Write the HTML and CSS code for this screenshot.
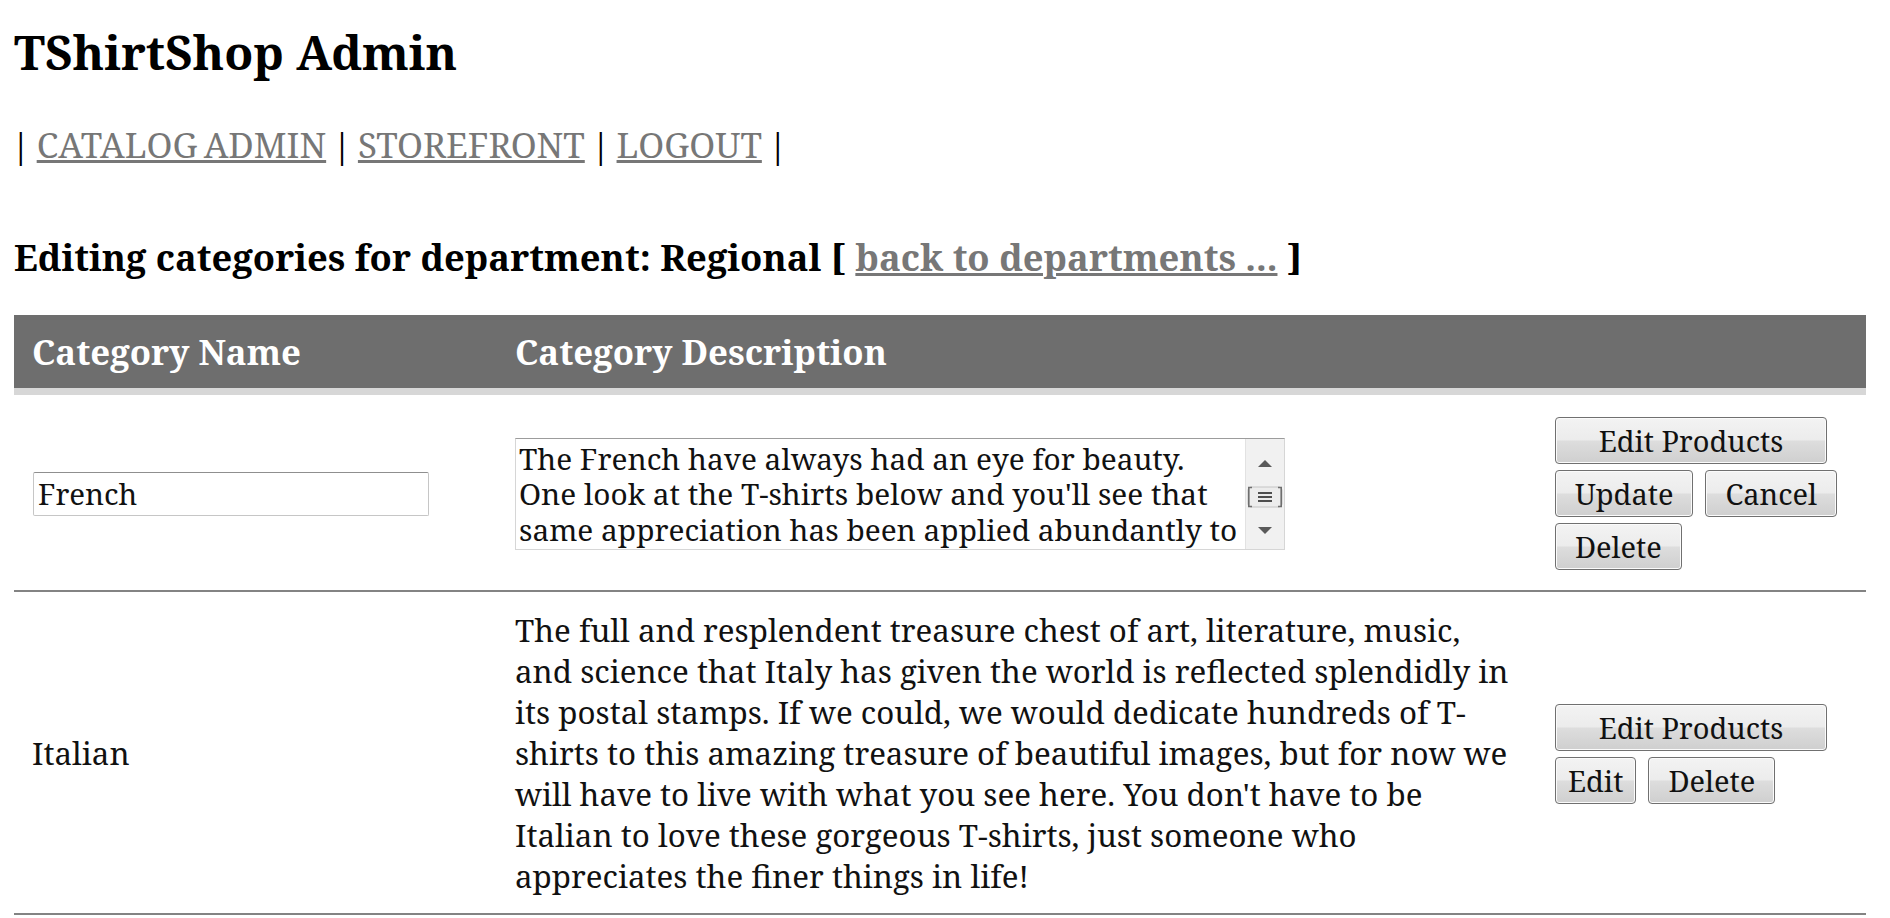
FILE: index.html
```html
<!DOCTYPE html>
<html lang="en">
<head>
<meta charset="utf-8">
<title>TShirtShop Admin</title>
<link rel="stylesheet" href="styles.css">
</head>
<body>
<h1 class="title">TShirtShop Admin</h1>
<nav class="menu">| <a href="#">CATALOG ADMIN</a> | <a href="#">STOREFRONT</a> | <a href="#">LOGOUT</a> |</nav>
<h2 class="section-title">Editing categories for department: Regional [ <a href="#">back to departments ...</a> ]</h2>
<table class="grid">
  <colgroup>
    <col class="c-name">
    <col class="c-desc">
    <col class="c-act">
  </colgroup>
  <thead>
    <tr>
      <th>Category Name</th>
      <th>Category Description</th>
      <th></th>
    </tr>
  </thead>
  <tbody>
    <tr>
      <td><input class="name-input" type="text" value="French"></td>
      <td>
        <div class="desc-box">
          <textarea class="desc-input">The French have always had an eye for beauty. One look at the T-shirts below and you'll see that same appreciation has been applied abundantly to everything from painting to sculpture to architecture. Enjoy!</textarea>
          <div class="vscroll">
            <svg class="arrow" width="14" height="7" viewBox="0 0 14 7"><path d="M7 0 L14 7 H0 Z" fill="#5a5a5a"/></svg>
            <svg class="thumb" width="36" height="22" viewBox="0 0 36 22">
              <rect x="1" y="1" width="34" height="20" rx="3" fill="#ececec" stroke="#c4c4c4"/>
              <path d="M5 1.5 H1.8 V20.5 H5 M31 1.5 H34.2 V20.5 H31" fill="none" stroke="#6e6e6e" stroke-width="1.6"/>
              <path d="M11 7 H25 M11 11 H25 M11 15 H25" stroke="#4e4e4e" stroke-width="2"/>
            </svg>
            <svg class="arrow" width="14" height="7" viewBox="0 0 14 7"><path d="M0 0 H14 L7 7 Z" fill="#5a5a5a"/></svg>
          </div>
        </div>
      </td>
      <td>
        <div class="actions">
          <button class="btn btn-wide" type="button">Edit Products</button>
          <button class="btn" type="button">Update</button>
          <button class="btn" type="button">Cancel</button>
          <button class="btn" type="button">Delete</button>
        </div>
      </td>
    </tr>
    <tr>
      <td>Italian</td>
      <td>The full and resplendent treasure chest of art, literature, music, and science that Italy has given the world is reflected splendidly in its postal stamps. If we could, we would dedicate hundreds of T-shirts to this amazing treasure of beautiful images, but for now we will have to live with what you see here. You don't have to be Italian to love these gorgeous T-shirts, just someone who appreciates the finer things in life!</td>
      <td>
        <div class="actions">
          <button class="btn btn-wide" type="button">Edit Products</button>
          <button class="btn btn-narrow" type="button">Edit</button>
          <button class="btn" type="button">Delete</button>
        </div>
      </td>
    </tr>
  </tbody>
</table>
</body>
</html>
```
FILE: styles.css
```css
html, body {
  background: #ffffff;
}

body {
  margin: 0;
  padding: 0 14px;
  font-family: "Noto Serif", "DejaVu Serif", serif;
  color: #000;
}

a {
  color: #777777;
  text-decoration: underline;
}

.title {
  margin: 24px 0 0;
  font-size: 47.5px;
  line-height: 56px;
  font-weight: bold;
  color: #000;
}

.menu {
  margin: 45px 0 0 -3px;
  font-size: 35px;
  line-height: 40px;
  word-spacing: -3px;
  color: #000;
}

.section-title {
  margin: 70px 0 0;
  font-size: 36.4px;
  line-height: 44px;
  font-weight: bold;
  color: #000;
}

.grid {
  margin-top: 36px;
  width: 1852px;
  table-layout: fixed;
  border-collapse: collapse;
}

.c-name { width: 483px; }
.c-desc { width: 1040px; }
.c-act { width: 329px; }

.grid th {
  background: #6e6e6e;
  color: #ffffff;
  text-align: left;
  font-size: 34.8px;
  line-height: 40px;
  font-weight: bold;
  padding: 17px 18px 16px;
  border-bottom: 7px solid #d7d7d7;
}

.grid td {
  vertical-align: middle;
  padding: 18px 18px 16px;
  font-size: 31.3px;
  line-height: 41px;
  color: #111;
  border-bottom: 2px solid #838383;
}

.grid td:nth-child(2),
.grid th:nth-child(2) {
  padding-right: 22px;
}

.name-input {
  box-sizing: border-box;
  display: block;
  width: 396px;
  height: 44px;
  margin: 0 0 0 1px;
  padding: 0 4px;
  font-family: "Noto Serif", "DejaVu Serif", serif;
  font-size: 29.5px;
  color: #111;
  border: 1px solid #c6c6c6;
  border-top-color: #8f8f8f;
  border-radius: 2px;
  background: #fff;
  outline: none;
}

.desc-box {
  box-sizing: border-box;
  display: flex;
  width: 770px;
  height: 112px;
  border: 1px solid #d6d6d6;
  border-top-color: #9c9c9c;
  background: #fff;
}

.desc-input {
  flex: 1;
  margin: 0;
  padding: 2px 5px 0 3px;
  border: none;
  outline: none;
  resize: none;
  overflow: hidden;
  font-family: "Noto Serif", "DejaVu Serif", serif;
  font-size: 29.8px;
  line-height: 35.6px;
  color: #111;
  background: #fff;
}

.vscroll {
  width: 39px;
  flex: none;
  display: flex;
  flex-direction: column;
  align-items: center;
  justify-content: space-between;
  padding: 21px 0 15px;
  background: #f1f1f1;
  border-left: 1px solid #e2e2e2;
  box-sizing: border-box;
}

.vscroll svg {
  display: block;
}

.actions {
  display: flex;
  flex-wrap: wrap;
  column-gap: 12px;
  row-gap: 6px;
  margin: 4px 0;
}

.btn {
  box-sizing: border-box;
  height: 47px;
  padding: 0 19px;
  font-family: "Noto Serif", "DejaVu Serif", serif;
  font-size: 29px;
  line-height: 1;
  color: #111;
  border: 1px solid #707070;
  border-radius: 4px;
  background: linear-gradient(#f3f3f3 0%, #ececec 48%, #dddddd 52%, #cfcfcf 100%);
  box-shadow: inset 0 0 0 1px #fbfbfb;
  cursor: pointer;
}

.btn-wide {
  width: 272px;
}

.btn-narrow {
  padding: 0 12px;
}
```
